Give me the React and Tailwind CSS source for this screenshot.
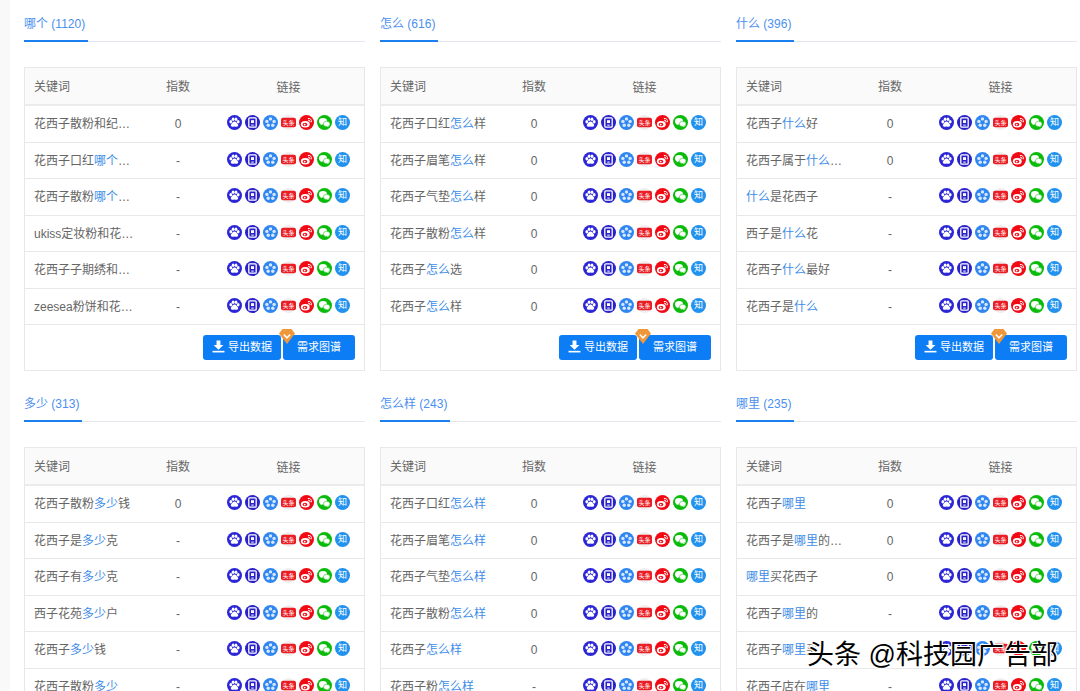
const sections = [
  { t: "哪个", n: 1120, rows: [
    ["花西子散粉和纪梵希散粉", "0"], ["花西子口红{哪个}颜色好看", "-"], ["花西子散粉{哪个}色号好", "-"],
    ["ukiss定妆粉和花西子散粉", "-"], ["花西子子期绣和花西子", "-"], ["zeesea粉饼和花西子粉饼", "-"] ] },
  { t: "怎么", n: 616, rows: [
    ["花西子口红{怎么}样", "0"], ["花西子眉笔{怎么}样", "0"], ["花西子气垫{怎么}样", "0"],
    ["花西子散粉{怎么}样", "0"], ["花西子{怎么}选", "0"], ["花西子{怎么}样", "0"] ] },
  { t: "什么", n: 396, rows: [
    ["花西子{什么}好", "0"], ["花西子属于{什么}档次的", "0"], ["{什么}是花西子", "-"],
    ["西子是{什么}花", "-"], ["花西子{什么}最好", "-"], ["花西子是{什么}", "-"] ] },
  { t: "多少", n: 313, rows: [
    ["花西子散粉{多少}钱", "0"], ["花西子是{多少}克", "-"], ["花西子有{多少}克", "-"],
    ["西子花苑{多少}户", "-"], ["花西子{多少}钱", "-"], ["花西子散粉{多少}", "-"] ] },
  { t: "怎么样", n: 243, rows: [
    ["花西子口红{怎么样}", "0"], ["花西子眉笔{怎么样}", "0"], ["花西子气垫{怎么样}", "0"],
    ["花西子散粉{怎么样}", "0"], ["花西子{怎么样}", "0"], ["花西子粉{怎么样}", "-"] ] },
  { t: "哪里", n: 235, rows: [
    ["花西子{哪里}", "0"], ["花西子是{哪里}的品牌呢", "0"], ["{哪里}买花西子", "0"],
    ["花西子{哪里}的", "-"], ["花西子{哪里}买", "-"], ["花西子店在{哪里}", "-"] ] },
];

function Keyword({ text }) {
  const parts = text.split(/[{}]/);
  return (
    <span className="block w-[101px] truncate mt-[1px]">
      {parts.map((p, i) =>
        i % 2 === 1 ? <span key={i} className="text-[#3c8ce8]">{p}</span> : <span key={i}>{p}</span>
      )}
    </span>
  );
}

function Icons() {
  return (
    <div className="flex gap-[3px] w-[124px] shrink-0">
      {/* 百度 */}
      <svg viewBox="0 0 15 15" className="w-[15px] h-[15px]">
        <circle cx="7.5" cy="7.5" r="7.5" fill="#2b26d6" />
        <ellipse cx="3.8" cy="6.8" rx="1.4" ry="1.7" fill="#fff" />
        <ellipse cx="6.1" cy="4.2" rx="1.4" ry="1.8" fill="#fff" />
        <ellipse cx="9" cy="4.2" rx="1.4" ry="1.8" fill="#fff" />
        <ellipse cx="11.2" cy="6.8" rx="1.4" ry="1.7" fill="#fff" />
        <path d="M7.5 6.5c1.6 0 2.2 1.5 3.200 2.400 1.100 1.100.4 3-1.300 2.900-.7 0-1.300-.3-1.900-.3s-1.200.3-1.900.3c-1.700.1-2.400-1.800-1.300-2.900 1-.9 1.600-2.400 3.200-2.400z" fill="#fff" />
      </svg>
      {/* 手机 */}
      <svg viewBox="0 0 15 15" className="w-[15px] h-[15px]">
        <circle cx="7.500" cy="7.500" r="7.500" fill="#2a22c8" />
        <rect x="3.800" y="2.800" width="7.400" height="9.400" rx="1" fill="none" stroke="#fff" strokeWidth="1.300" />
        <rect x="6" y="5.200" width="3" height="2.800" fill="#fff" />
        <rect x="6.300" y="9.600" width="2.400" height="1" fill="#fff" />
      </svg>
      {/* 花 */}
      <svg viewBox="0 0 15 15" className="w-[15px] h-[15px]">
        <circle cx="7.500" cy="7.500" r="7.500" fill="#2f86f0" />
        <circle cx="7.500" cy="3.900" r="1.700" fill="#d8e8ff" />
        <circle cx="3.900" cy="6.400" r="1.700" fill="#d8e8ff" />
        <circle cx="11.100" cy="6.400" r="1.700" fill="#d8e8ff" />
        <circle cx="5.200" cy="10.300" r="1.700" fill="#d8e8ff" />
        <circle cx="9.800" cy="10.300" r="1.700" fill="#d8e8ff" />
        <circle cx="7.500" cy="7.300" r="1.100" fill="#2f86f0" />
      </svg>
      {/* 头条 */}
      <svg viewBox="0 0 15 15" className="w-[15px] h-[15px]">
        <circle cx="7.500" cy="7.500" r="7.500" fill="#efefef" />
        <rect x="0" y="2.800" width="15" height="9.400" rx="2" fill="#ea1c24" />
        <text x="7.500" y="9.800" textAnchor="middle" fontSize="6" fill="#fff" fontFamily="'Noto Sans CJK SC', sans-serif">头条</text>
      </svg>
      {/* 微博 */}
      <svg viewBox="0 0 15 15" className="w-[15px] h-[15px]">
        <circle cx="7.500" cy="7.500" r="7.500" fill="#f00a14" />
        <ellipse cx="6.300" cy="9.300" rx="4.400" ry="3.200" fill="#fff" />
        <ellipse cx="6" cy="9.500" rx="2.300" ry="1.800" fill="#f00a14" />
        <circle cx="5.700" cy="9.600" r="0.900" fill="#fff" />
        <path d="M9.300 3.400c2.100-.4 3.700 1.400 3 3.500M9.500 5.200c1-.2 1.600.5 1.400 1.500" fill="none" stroke="#fff" strokeWidth="1" strokeLinecap="round" />
      </svg>
      {/* 微信 */}
      <svg viewBox="0 0 15 15" className="w-[15px] h-[15px]">
        <circle cx="7.500" cy="7.500" r="7.500" fill="#0abb0a" />
        <ellipse cx="6" cy="6.300" rx="4" ry="3.200" fill="#fff" />
        <path d="M4 8.500l-.6 1.700 2-1z" fill="#fff" />
        <ellipse cx="9.700" cy="8.900" rx="3.300" ry="2.600" fill="#fff" stroke="#0abb0a" strokeWidth="0.500" />
        <path d="M11 10.800l.6 1.200-1.700-.8z" fill="#fff" />
      </svg>
      {/* 知乎 */}
      <span className="w-[15px] h-[15px] rounded-full bg-[#2192ee] text-white text-[9px] leading-[15px] text-center">知</span>
    </div>
  );
}

function Section({ t, n, rows }) {
  return (
    <section className="h-[380px]">
      <div className="h-[42px] pt-[16px] border-b border-[#e4e7ed]">
        <span className="block w-fit h-[26px] pr-[3px] text-[12px] leading-[16px] text-[#4b8ff0] border-b-2 border-[#1b7ff0]">
          {t} ({n})
        </span>
      </div>
      <div className="mt-[25px] border border-[#e8e8e8] h-[304px] flex flex-col">
        <div className="flex h-[38px] shrink-0 items-center bg-[#fafafa] border-b-2 border-[#ebebeb] text-[12px] text-[#666] pl-[9px]">
          <span className="w-[101px] mt-[1px]">关键词</span>
          <span className="w-[86px] text-center mt-[1px]">指数</span>
          <span className="flex-1 text-center mt-[3px] pr-[8px]">链接</span>
        </div>
        {rows.map(([k, v], i) => (
          <div key={i} className="flex h-[36.5px] shrink-0 items-center border-b border-[#e8e8e8] text-[12px] text-[#666] pl-[9px]">
            <Keyword text={k} />
            <span className="w-[86px] text-center mt-[1px]">{v}</span>
            <div className="ml-[6px] -mt-[2px]"><Icons /></div>
          </div>
        ))}
        <div className="flex-1 flex justify-end items-start pt-[10px] pr-[9px] gap-[2px]">
          <button className="w-[78px] h-[25px] rounded-[3px] bg-[#0d7df5] text-white text-[11px] flex items-center justify-center gap-[3px]">
            <svg viewBox="0 0 12 12" className="w-[13px] h-[13px] -mt-[2px]" fill="#fff">
              <path d="M4.200 .5h3.600v4.200h2.700L6 9 1.500 4.700h2.700z" />
              <rect x=".5" y="10" width="11" height="1.500" />
            </svg>
            导出数据
          </button>
          <button className="relative w-[72px] h-[25px] rounded-[3px] bg-[#0d7df5] text-white text-[11px]">
            需求图谱
            <svg viewBox="0 0 16 15" className="absolute -left-[4px] -top-[6px] w-[16px] h-[15px]">
              <path d="M3.500 0h9L16 4.500 8 15 0 4.500z" fill="#f0973a" />
              <path d="M4.800 5.500 8 8.800l3.200-3.300" fill="none" stroke="#fff" strokeWidth="1.500" />
            </svg>
          </button>
        </div>
      </div>
    </section>
  );
}

export default function App() {
  return (
    <div className="relative w-[1080px] h-[691px] overflow-hidden bg-white font-['Liberation_Sans','Noto_Sans_CJK_SC',sans-serif] flex">
      <div className="w-[10px] shrink-0 bg-[#f9f9f9]" />
      <div className="ml-[14px] grid grid-cols-[341px_341px_341px] gap-x-[15px] content-start">
        {sections.map((s) => <Section key={s.t} {...s} />)}
      </div>
      <div className="absolute left-[807px] top-[639px] text-[27px] leading-[32px] text-black whitespace-nowrap [text-shadow:1px_1px_0_#fff,-1px_-1px_0_#fff,1px_-1px_0_#fff,-1px_1px_0_#fff]">
        头条 @科技园广告部
      </div>
    </div>
  );
}
